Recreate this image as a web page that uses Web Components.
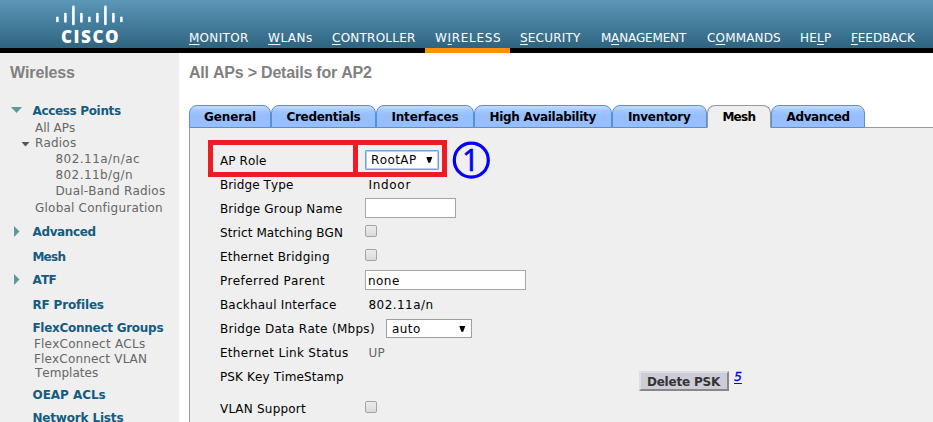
<!DOCTYPE html>
<html lang="en">
<head>
<meta charset="utf-8">
<title>Wireless - All APs</title>
<style>
html, body { margin: 0; height: 422px; overflow: hidden; background: #fff; }
body { font: 12px/14px "DejaVu Sans", Verdana, sans-serif; color: #000; }
</style>
</head>
<body>
<wlc-app></wlc-app>
<script>
function define(name, html, init) {
  const t = document.createElement('template');
  t.innerHTML = html;
  customElements.define(name, class extends HTMLElement {
    connectedCallback() {
      if (this.shadowRoot) return;
      this.attachShadow({ mode: 'open' }).append(t.content.cloneNode(true));
      if (init) init.call(this, this.shadowRoot);
    }
  });
}

// Spaces its letters so that the visible glyphs span `w` pixels.
const ctx = document.createElement('canvas').getContext('2d');
ctx.fontKerning = 'none';
define('fit-text', `<style>
:host { display: inline-block; white-space: pre; font-kerning: none; font-variant-ligatures: none; }
</style><slot></slot>`, function () {
  const s = this.textContent, w = +this.getAttribute('w'), cs = getComputedStyle(this);
  ctx.font = `${cs.fontStyle} ${cs.fontWeight} ${cs.fontSize} ${cs.fontFamily}`;
  const m = ctx.measureText(s);
  const left = m.actualBoundingBoxLeft;
  const ink = m.actualBoundingBoxRight + left;
  this.style.width = w + 'px';
  if (s.length > 1) this.style.letterSpacing = (w - (left < 0 ? 1 : 0) - ink) / (s.length - 1) + 'px';
  this.style.textIndent = left < 0 ? left + 0.9 + 'px' : left + 'px';
});

define('brand-logo', `<style>
:host { display: block; width: 189px; height: 48px; box-sizing: border-box; padding-left: 56px; color: #fff; }
svg { display: block; width: 68px; height: 29px; }
fit-text { margin-left: 5px; font: 800 17px/16px "Open Sans", sans-serif; }
</style>
<svg viewBox="56 0 68 29" stroke="#fff" stroke-width="2.6" stroke-linecap="round">
<path d="M57.4 17.7V21M65.4 14V21.5M73.4 6.7V24M81.4 14V21.5M89.4 17.7V21M97.4 14V21.5M105.4 6.7V24M113.4 14V21.5M121.4 17.7V21"/></svg>
<fit-text w="57">CISCO</fit-text>`);

define('nav-item', `<style>
:host { display: block; height: 53px; box-sizing: border-box; padding: 31px 10px 0; color: #fff; }
:host([active]) { background: linear-gradient(#ff9000, #ff9000) 0 48px / 100% 5px no-repeat; }
</style><slot></slot>`, function (root) {
  const s = this.getAttribute('label'), k = +this.getAttribute('key');
  const f = document.createElement('fit-text');
  f.setAttribute('w', this.getAttribute('w'));
  const u = document.createElement('span');
  u.textContent = s[k];
  u.style.cssText = 'letter-spacing:inherit;text-decoration:underline;text-underline-offset:1.5px;text-decoration-thickness:1px;text-indent:0';
  f.append(s.slice(0, k), u, s.slice(k + 1));
  root.append(f);
});

define('top-bar', `<style>
:host { display: flex; height: 53px; background: linear-gradient(#5b97b8, #2e6480) 0 0 / 100% 48px no-repeat #000; }
nav { display: flex; margin-left: -10px; }
</style>
<brand-logo></brand-logo>
<nav>
<nav-item label="MONITOR" key="0" w="59"></nav-item>
<nav-item label="WLANs" key="0" w="44"></nav-item>
<nav-item label="CONTROLLER" key="0" w="83"></nav-item>
<nav-item label="WIRELESS" key="1" w="65" active></nav-item>
<nav-item label="SECURITY" key="0" w="61"></nav-item>
<nav-item label="MANAGEMENT" key="1" w="86"></nav-item>
<nav-item label="COMMANDS" key="1" w="73"></nav-item>
<nav-item label="HELP" key="2" w="31"></nav-item>
<nav-item label="FEEDBACK" key="0" w="65"></nav-item>
</nav>`);

define('side-item', `<style>
:host { display: grid; height: 14px; align-items: center; color: #666; }
:host([top]) { color: #145b80; font-weight: bold; }
svg { display: block; }
</style><svg width="12" height="12"></svg><fit-text></fit-text>`, function (root) {
  const x = +this.getAttribute('x'), svg = root.querySelector('svg'), kind = this.getAttribute('arrow');
  const ax = kind === 'small' ? 20 : 10;
  this.style.gridTemplateColumns = `${x - ax}px 1fr`;
  this.style.paddingLeft = ax + 'px';
  this.style.marginTop = this.getAttribute('gap') + 'px';
  const shapes = {
    down: '<path fill="#5b9a98" d="M1 2H12L6.5 8Z"/>',
    right: '<path fill="#5b9a98" d="M4 0V11L9.500 5.500Z"/>',
    small: '<path fill="#555" d="M1.500 5H9.500L5.500 9.500Z"/>'
  };
  svg.innerHTML = shapes[kind] || '';
  const old = root.querySelector('fit-text'), f = document.createElement('fit-text');
  f.setAttribute('w', this.getAttribute('w'));
  f.textContent = this.getAttribute('label');
  old.replaceWith(f);
});

define('side-menu', `<style>
:host { display: block; width: 179px; box-sizing: border-box; background: #efefef; overflow: hidden; }
h2 { margin: 0; padding: 12px 0 0 10px; height: 40px; box-sizing: border-box; color: #808080; font: bold 16px/16px "Liberation Sans", Arial, sans-serif; }
</style>
<h2><fit-text w="65">Wireless</fit-text></h2>
<side-item top arrow="down" gap="11" x="32.5" w="88.5" label="Access Points"></side-item>
<side-item gap="3" x="35" w="40" label="All APs"></side-item>
<side-item arrow="small" gap="1" x="35" w="41" label="Radios"></side-item>
<side-item gap="2" x="55.5" w="83.5" label="802.11a/n/ac"></side-item>
<side-item gap="2" x="55.5" w="76.5" label="802.11b/g/n"></side-item>
<side-item gap="2" x="55.5" w="109.5" label="Dual-Band Radios"></side-item>
<side-item gap="3" x="35" w="127" label="Global Configuration"></side-item>
<side-item top arrow="right" gap="10" x="32.5" w="63" label="Advanced"></side-item>
<side-item top gap="11" x="32.5" w="33" label="Mesh"></side-item>
<side-item top arrow="right" gap="9" x="32.5" w="24" label="ATF"></side-item>
<side-item top gap="11" x="32.5" w="71" label="RF Profiles"></side-item>
<side-item top gap="9" x="32.5" w="131" label="FlexConnect Groups"></side-item>
<side-item gap="2" x="34" w="111" label="FlexConnect ACLs"></side-item>
<side-item gap="1" x="34" w="112" label="FlexConnect VLAN"></side-item>
<side-item gap="0" x="34" w="64" label="Templates"></side-item>
<side-item top gap="8" x="32.5" w="73" label="OEAP ACLs"></side-item>
<side-item top gap="9" x="32.5" w="91" label="Network Lists"></side-item>`);

define('tab-item', `<style>
:host { display: flex; justify-content: center; box-sizing: border-box; height: 23px; padding-top: 4px; font-weight: bold;
 border: 1px solid #5a8fd6; border-radius: 8px 8px 0 0; background: linear-gradient(#c4dbff 0, #a3c6ff 5px, #97bfff 9px); }
:host([active]) { border-color: #999; border-bottom-color: #efefef; background: #efefef; }
</style><slot></slot>`, function () { this.style.width = this.getAttribute('width') + 'px'; });

define('tab-bar', `<style>:host { display: flex; height: 22px; }</style>
<tab-item width="82"><fit-text w="52">General</fit-text></tab-item>
<tab-item width="105"><fit-text w="74">Credentials</fit-text></tab-item>
<tab-item width="98"><fit-text w="67">Interfaces</fit-text></tab-item>
<tab-item width="138"><fit-text w="107">High Availability</fit-text></tab-item>
<tab-item width="95"><fit-text w="63">Inventory</fit-text></tab-item>
<tab-item width="64" active><fit-text w="33">Mesh</fit-text></tab-item>
<tab-item width="94"><fit-text w="63">Advanced</fit-text></tab-item>`);

define('drop-down', `<style>
:host { display: flex; box-sizing: border-box; height: 19px; margin-bottom: 1px; align-items: center; justify-content: space-between; padding: 0 5px; background: #fff; border: 1px solid #a0a0a0; }
:host([focused]) { height: 20px; margin-bottom: 2px; border-color: #6f9fdc; box-shadow: inset 0 0 0 1px #b5cff0; border-radius: 1px; }
svg { display: block; }
</style><slot></slot><svg width="7" height="6"><path d="M.3 0H6.300L4.200 5.700H2.400Z"/></svg>`, function () {
  this.style.width = this.getAttribute('width') + 'px';
});

define('text-box', `<style>
:host { display: flex; box-sizing: border-box; height: 20px; margin-bottom: 2px; align-items: center; padding: 1px 0 0 2px; background: #fff; border: 1px solid #a6a6a6; }
</style><slot></slot>`, function () { this.style.width = this.getAttribute('width') + 'px'; });

define('check-box', `<style>
:host { display: block; box-sizing: border-box; width: 12px; height: 12px; margin-bottom: 5px; border: 1px solid #a3a3a3; border-radius: 2px; background: linear-gradient(#ececec, #dadada); }
</style>`);

define('form-row', `<style>
:host { display: grid; grid-template-columns: 145px auto 1fr; height: 24px; align-items: center; }
:host([wide]) { grid-template-columns: 166px auto 1fr; }
:host([tall]) { height: 32px; }
:host([tall]) fit-text { margin-bottom: 8px; }
:host([plain]) ::slotted(fit-text) { margin-left: 3.500px; }
</style><slot></slot>`, function (root) {
  const f = document.createElement('fit-text');
  f.setAttribute('w', this.getAttribute('w'));
  f.textContent = this.getAttribute('label');
  root.querySelector('slot').before(f);
});

define('psk-button', `<style>
:host { display: block; box-sizing: border-box; width: 90px; height: 20px; padding: 2px 0 0 6px; color: #333; font-weight: bold;
 background: #cccdd9; border: 2px solid; border-color: #dedee2 #888 #888 #dedee2; }
</style><slot></slot>`);

define('psk-actions', `<style>
:host { display: flex; align-items: flex-start; margin: 6px 0 0 274px; align-self: start; }
a { margin: -1px 0 0 5px; color: #00e; font-style: oblique; font-size: 12.5px; text-decoration: underline; text-underline-offset: 1.500px; -webkit-text-stroke: .3px #00e; }
</style><psk-button><fit-text w="74">Delete PSK</fit-text></psk-button><a>5</a>`);

// Red frame and numbered circle laid over the role row.
define('step-callout', `<style>
:host { position: absolute; left: 208px; top: 140px; display: flex; align-items: center; height: 37px; }
.frame { box-sizing: border-box; width: 239px; height: 37px; border: 5px solid #ed1c24; }
.frame i { display: block; box-sizing: border-box; height: 27px; border-right: 5px solid #ed1c24; width: 145px; }
svg { display: block; margin: 0 0 0 5px; overflow: visible; }
</style><div class="frame"><i></i></div>
<svg width="38" height="38"><circle cx="19.3" cy="20.2" r="17" fill="none" stroke="#00f" stroke-width="3.200"/>
<text x="18.5" y="31" text-anchor="middle" font-family="Noto Sans, sans-serif" font-size="30" fill="#00f" stroke="#00f" stroke-width=".5">1</text></svg>`);

define('mesh-form', `<style>
:host { display: block; flex: 1; box-sizing: border-box; padding: 21px 0 0 30px; background: #efefef; border: 1px solid #999; border-width: 1px 0 0 1px; }
.grey { color: #666; }
</style>
<form-row label="AP Role" w="46"><drop-down focused width="74"><fit-text w="45">RootAP</fit-text></drop-down></form-row>
<form-row plain label="Bridge Type" w="73"><fit-text w="42">Indoor</fit-text></form-row>
<form-row label="Bridge Group Name" w="122"><text-box width="91"></text-box></form-row>
<form-row label="Strict Matching BGN" w="122"><check-box></check-box></form-row>
<form-row label="Ethernet Bridging" w="109"><check-box></check-box></form-row>
<form-row label="Preferred Parent" w="105"><text-box width="161"><fit-text w="31">none</fit-text></text-box></form-row>
<form-row plain label="Backhaul Interface" w="116"><fit-text w="64">802.11a/n</fit-text></form-row>
<form-row wide label="Bridge Data Rate (Mbps)" w="154"><drop-down width="86"><fit-text w="28">auto</fit-text></drop-down></form-row>
<form-row plain label="Ethernet Link Status" w="128"><fit-text class="grey" w="16">UP</fit-text></form-row>
<form-row tall label="PSK Key TimeStamp" w="123"><psk-actions></psk-actions></form-row>
<form-row label="VLAN Support" w="86"><check-box></check-box></form-row>`);

define('wlc-app', `<style>
:host { display: flex; flex-direction: column; width: 933px; height: 422px; overflow: hidden; position: relative; }
.body { flex: 1; display: flex; min-height: 0; }
main { flex: 1; display: flex; flex-direction: column; padding-left: 10px; min-width: 0; }
h1 { margin: 0; padding-top: 12px; height: 52px; box-sizing: border-box; color: #808080; font: bold 16px/16px "Liberation Sans", Arial, sans-serif; }
tab-bar { position: relative; z-index: 1; }
</style>
<top-bar></top-bar>
<div class="body"><side-menu></side-menu>
<main><h1><fit-text w="183">All APs &gt; Details for AP2</fit-text></h1><tab-bar></tab-bar><mesh-form></mesh-form></main></div>
<step-callout></step-callout>`);
</script>
</body>
</html>
